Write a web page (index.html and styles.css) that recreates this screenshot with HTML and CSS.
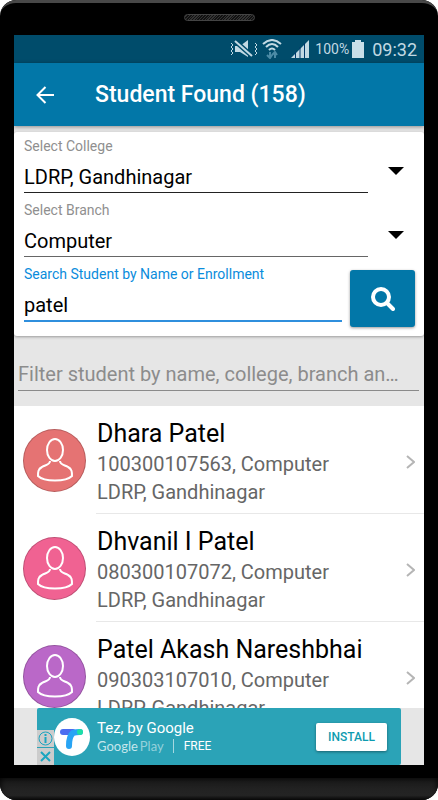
FILE: index.html
```html
<!DOCTYPE html>
<html lang="en">
  <head>
    <meta charset="UTF-8" />
    <meta name="viewport" content="width=device-width, initial-scale=1.0" />
    <title>Student Found</title>
    <link rel="stylesheet" href="styles.css">
  </head>
  <body>
    <div class="phone">
      <div class="bezel-top"><span class="speaker"></span></div>

      <div class="screen">
        <div class="status">
          <svg class="mute" width="28" height="20" viewBox="0 0 28 20">
            <path d="M5 7h5l8-6v17l-8-5H5z" fill="#c2d9e3" />
            <path d="M5 2l17 15" stroke="#004c6b" stroke-width="5" />
            <path d="M5 2l17 15" stroke="#c2d9e3" stroke-width="2" />
            <path d="M1 4l2 2-2 2 2 2-2 2 2 2-2 2M25 4l2 2-2 2 2 2-2 2 2 2-2 2" fill="none" stroke="#c2d9e3" />
          </svg>
          <svg class="wifi" width="20" height="20" viewBox="0 0 20 20">
            <path d="M1 5q9-8 18 0M4 8q6-6 12 0M7 11q3-3 6 0" fill="none" stroke="#c2d9e3" stroke-width="2" />
            <path d="M8 13v6M5 16l3 3 2-3M13 19v-6M10 16l3-3 2 3" fill="none" stroke="#4b8ba6" stroke-width="2" />
          </svg>
          <svg class="signal" width="18" height="18" viewBox="0 0 18 18">
            <path d="M0 18L18 0v18z" fill="#c2d9e3" />
            <path d="M4.500 12v6M9 7v11M13.500 3v15" stroke="#003a6b" />
          </svg>
          <span class="percent">100%</span>
          <svg class="battery" width="12" height="18" viewBox="0 0 12 18">
            <path d="M3 0h6v2h3v16H0V2h3z" fill="#c9dfe8" />
          </svg>
          <span class="clock">09:32</span>
        </div>

        <header>
          <button class="back" aria-label="Back">
            <svg width="18" height="18" viewBox="0 0 18 18">
              <path d="M18 9H2M9.500 1L1.500 9l8 8" fill="none" stroke="#fff" stroke-width="2" />
            </svg>
          </button>
          <h1>Student Found (158)</h1>
        </header>

        <form class="card">
          <div class="field">
            <label for="college">Select College</label>
            <select id="college">
              <option>LDRP, Gandhinagar</option>
            </select>
            <svg class="caret" width="16" height="8" viewBox="0 0 16 8"><path d="M0 0h16L8 8z" /></svg>
          </div>
          <div class="field branch">
            <label for="branch">Select Branch</label>
            <select id="branch">
              <option>Computer</option>
            </select>
            <svg class="caret" width="16" height="8" viewBox="0 0 16 8"><path d="M0 0h16L8 8z" /></svg>
          </div>
          <div class="search">
            <div class="query">
              <label for="student">Search Student by Name or Enrollment</label>
              <input id="student" type="text" value="patel" />
            </div>
            <button type="button" class="find" aria-label="Search">
              <svg width="24" height="24" viewBox="0 0 24 24" fill="none" stroke="#fff">
                <circle cx="10" cy="10" r="8" stroke-width="4" />
                <path d="M16 16l6 6" stroke-width="4" stroke-linecap="round" />
              </svg>
            </button>
          </div>
        </form>

        <div class="filter">
          <input type="text" aria-label="Filter student" placeholder="Filter student by name, college, branch and enrollment" />
        </div>

        <ul class="students">
          <li>
            <a href="#">
              <span class="avatar red">
                <svg width="36" height="44" viewBox="0 0 36 44">
                  <ellipse cx="18" cy="12" rx="8" ry="11" />
                  <path d="M13 23c0 4-5 4-8 6-4 2-4 5-4 9 6 6 28 6 34 0 0-4 0-7-4-9-3-2-8-2-8-6" />
                </svg>
              </span>
              <div class="info">
                <div>
                  <h2>Dhara Patel</h2>
                  <p>100300107563, Computer</p>
                  <p>LDRP, Gandhinagar</p>
                </div>
                <svg class="chevron" width="9" height="14" viewBox="0 0 9 14"><path d="M1 1l7 6-7 6" /></svg>
              </div>
            </a>
          </li>
          <li>
            <a href="#">
              <span class="avatar pink">
                <svg width="36" height="44" viewBox="0 0 36 44">
                  <ellipse cx="18" cy="12" rx="8" ry="11" />
                  <path d="M13 23c0 4-5 4-8 6-4 2-4 5-4 9 6 6 28 6 34 0 0-4 0-7-4-9-3-2-8-2-8-6" />
                </svg>
              </span>
              <div class="info">
                <div>
                  <h2>Dhvanil I Patel</h2>
                  <p>080300107072, Computer</p>
                  <p>LDRP, Gandhinagar</p>
                </div>
                <svg class="chevron" width="9" height="14" viewBox="0 0 9 14"><path d="M1 1l7 6-7 6" /></svg>
              </div>
            </a>
          </li>
          <li>
            <a href="#">
              <span class="avatar purple">
                <svg width="36" height="44" viewBox="0 0 36 44">
                  <ellipse cx="18" cy="12" rx="8" ry="11" />
                  <path d="M13 23c0 4-5 4-8 6-4 2-4 5-4 9 6 6 28 6 34 0 0-4 0-7-4-9-3-2-8-2-8-6" />
                </svg>
              </span>
              <div class="info">
                <div>
                  <h2>Patel Akash Nareshbhai</h2>
                  <p>090303107010, Computer</p>
                  <p>LDRP, Gandhinagar</p>
                </div>
                <svg class="chevron" width="9" height="14" viewBox="0 0 9 14"><path d="M1 1l7 6-7 6" /></svg>
              </div>
            </a>
          </li>
        </ul>

        <footer>
          <div class="ad">
            <div class="choices">
              <button aria-label="Ad info">
                <svg width="15" height="15" viewBox="0 0 15 15" fill="none" stroke="#1aa5c0">
                  <circle cx="7.500" cy="7.500" r="6.500" />
                  <path d="M7.500 6v6M7.500 3v2" stroke-width="2" />
                </svg>
              </button>
              <button aria-label="Close ad">
                <svg width="15" height="15" viewBox="0 0 15 15">
                  <path d="M3 3l9 9M12 3l-9 9" stroke="#1aa5c0" stroke-width="2" />
                </svg>
              </button>
            </div>
            <svg class="tez" width="36" height="38" viewBox="0 0 36 38">
              <ellipse cx="18" cy="19" rx="18" ry="19" fill="#fff" />
              <path d="M9 14h10" stroke="#4b6df0" stroke-width="6" stroke-linecap="round" />
              <path d="M15 28q0-10 4-13 3-1 7-1" fill="none" stroke="#28a4f4" stroke-width="6" stroke-linecap="round" />
              <circle cx="26" cy="14" r="3" fill="#1de0a5" />
            </svg>
            <div class="promo">
              <p>Tez, by Google</p>
              <p class="store"><span class="google">Google</span> <span class="play">Play</span><span class="free">FREE</span></p>
            </div>
            <button class="install">INSTALL</button>
          </div>
        </footer>
      </div>

      <div class="bezel-bottom"></div>
    </div>
  </body>
</html>
```
FILE: styles.css
```css
* {
  box-sizing: border-box;
}
body {
  margin: 0;
  background-color: white;
  font-family: Roboto, sans-serif;
}
h1,
h2,
p,
ul {
  margin: 0;
  padding: 0;
  font-weight: 400;
}
button,
input,
select {
  font-family: inherit;
  border: 0;
  border-radius: 0;
  padding: 0;
  margin: 0;
  outline: none;
}
svg {
  display: block;
  flex-shrink: 0;
}
.phone {
  display: flex;
  flex-direction: column;
  height: 100vh;
  background-color: black;
  border-radius: 16px;
  overflow: hidden;
}
.bezel-top {
  height: 35px;
  flex-shrink: 0;
  border-top: 3px solid #484848;
  border-radius: 16px 16px 0 0;
  display: flex;
  justify-content: center;
  padding-top: 11px;
}
.speaker {
  width: 71px;
  height: 7px;
  border: 1px solid #444;
  border-radius: 4px;
  background: repeating-linear-gradient(135deg, #111 0 1px, #333 1px 2px);
}
.bezel-bottom {
  height: 35px;
  flex-shrink: 0;
  border-top: 13px solid black;
  background: linear-gradient(#1a1a1a, #262626 80%, #111);
  box-shadow: inset 0 0 6px black;
}
.screen {
  flex: 1;
  min-height: 0;
  margin: 0 14px;
  background-color: #e6e6e6;
  display: flex;
  flex-direction: column;
}

/* status bar */
.status {
  height: 28px;
  flex-shrink: 0;
  background-color: #004c6b;
  color: #c2d9e3;
  display: flex;
  align-items: center;
  justify-content: flex-end;
  padding-right: 7px;
}
.wifi {
  margin: 0 9px 0 4px;
}
.percent {
  font-size: 14px;
  margin: 0 3px 0 6px;
}
.clock {
  font-size: 18px;
  margin-left: 8px;
}

header {
  height: 63px;
  flex-shrink: 0;
  background-color: #0277a8;
  color: white;
  display: flex;
  align-items: center;
  padding-left: 22px;
  box-shadow: 0 1px 4px #00000066;
}
.back {
  background: none;
  margin-right: 41px;
}
h1 {
  font-size: 23px;
  font-weight: 500;
}

/* search form */
.card {
  flex-shrink: 0;
  margin-top: 6px;
  padding: 4px 9px 9px 10px;
  background-color: white;
  border-radius: 3px;
  box-shadow: 0 1px 3px #00000055;
}
label {
  display: block;
  font-size: 14px;
  line-height: 20px;
  color: #8f8f8f;
}
.field {
  display: grid;
  grid-template-columns: 1fr 16px;
  column-gap: 20px;
  padding-right: 11px;
  height: 64px;
  align-content: start;
}
.field label {
  grid-column: 1 / 3;
}
select,
.query input {
  appearance: none;
  display: block;
  width: 100%;
  height: 37px;
  padding-top: 5px;
  background: none;
  border-bottom: 1px solid #222;
  color: black;
  font-size: 20px;
}
.branch select {
  border-bottom-color: #666;
}
.caret {
  margin-top: 11px;
}
.search {
  display: flex;
  gap: 8px;
}
.query {
  flex: 1;
}
.query label {
  color: #0a8cdc;
}
.query input {
  height: 38px;
  border-bottom: 2px solid #2f8fdd;
}
.find {
  width: 65px;
  height: 57px;
  margin-top: 6px;
  background-color: #0277a8;
  border-radius: 3px;
  box-shadow: 0 1px 3px #00000066;
  display: flex;
  align-items: center;
  justify-content: center;
}

.filter {
  flex-shrink: 0;
  height: 70px;
  padding: 20px 5px 0 4px;
}
.filter input {
  display: block;
  width: 100%;
  height: 35px;
  padding: 2px 10px 0 0;
  background: none;
  border-bottom: 1px solid #8a8a8a;
  font-size: 20px;
  text-overflow: ellipsis;
}
.filter input::placeholder {
  color: #8c8c8c;
}

/* result list */
.students {
  flex: 1;
  min-height: 0;
  overflow: hidden;
  list-style: none;
  background-color: white;
}
.students a {
  display: flex;
  align-items: center;
  height: 108px;
  padding-left: 9px;
  color: black;
  text-decoration: none;
}
.avatar {
  width: 63px;
  height: 63px;
  margin-right: 10px;
  flex-shrink: 0;
  border-radius: 50%;
  border: 1px solid #00000033;
  display: flex;
  align-items: center;
  justify-content: center;
}
.avatar svg,
.chevron {
  fill: none;
  stroke: white;
  stroke-width: 2;
}
.red {
  background-color: #e57373;
}
.pink {
  background-color: #f06292;
}
.purple {
  background-color: #ba68c8;
}
.info {
  flex: 1;
  height: 108px;
  padding: 4px 9px 0 1px;
  border-bottom: 1px solid #e8e8e8;
  display: flex;
  align-items: center;
  justify-content: space-between;
  white-space: nowrap;
}
.info h2 {
  font-size: 25px;
  line-height: 32px;
}
.info p {
  font-size: 20px;
  line-height: 28px;
  color: #666;
}
.chevron {
  stroke: #b5b5b5;
}

/* ad banner */
footer {
  flex-shrink: 0;
  padding: 0 23px;
}
.ad {
  height: 57px;
  background-color: #2ba3b7;
  border-radius: 2px;
  color: white;
  display: flex;
  align-items: center;
}
.choices {
  align-self: flex-end;
  display: flex;
  flex-direction: column;
  gap: 1px;
}
.choices button {
  width: 17px;
  height: 17px;
  padding: 1px;
  background-color: #ccc;
}
.promo {
  flex: 1;
  margin-left: 7px;
}
.promo p {
  font-size: 15px;
  line-height: 18px;
}
.promo .store {
  font-size: 13px;
  display: flex;
  gap: 2px;
}
.google,
.play {
  font-family: Lato, sans-serif;
  color: #c5e6ec;
}
.play {
  color: #95d1db;
}
.free {
  margin-left: 7px;
  padding-left: 10px;
  line-height: 14px;
  align-self: center;
  border-left: 1px solid #a5d8e0;
  font-size: 12px;
}
.install {
  width: 71px;
  height: 28px;
  margin-right: 14px;
  background-color: white;
  border-radius: 2px;
  box-shadow: 0 1px 3px #00000066;
  color: #0d9bb0;
  font-size: 12px;
  font-weight: 500;
}
```
